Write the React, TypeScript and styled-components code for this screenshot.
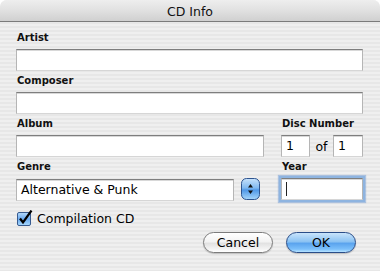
import React from "react";
import styled, { createGlobalStyle } from "styled-components";

const Global = createGlobalStyle`
  html, body { margin: 0; padding: 0; background: #ffffff; }
  body { font-family: "DejaVu Sans", "Verdana", sans-serif; color: #000; }
  * { box-sizing: border-box; }
`;

const Window = styled.div`
  width: 380px;
  height: 271px;
  display: flex;
  flex-direction: column;
  overflow: hidden;
  border-radius: 7px 7px 0 0;
  background: repeating-linear-gradient(
    to bottom,
    #efefef 0px,
    #efefef 2px,
    #e7e7e7 2px,
    #e7e7e7 4px
  );
`;

const TitleBar = styled.div`
  height: 22px;
  flex: none;
  display: flex;
  align-items: center;
  justify-content: center;
  background: linear-gradient(to bottom, #eeeeee 0%, #e2e2e2 45%, #d0d0d0 100%);
  border-bottom: 1px solid #7b7b7b;
  font-size: 12.5px;
  color: #111;
  padding-top: 1px;
`;

const Body = styled.div`
  flex: 1;
  display: flex;
  flex-direction: column;
  padding: 10px 17px 0 16px;
`;

const Field = styled.div<{ $top?: number }>`
  display: flex;
  flex-direction: column;
  margin-top: ${(p) => p.$top ?? 0}px;
`;

const Label = styled.div<{ $indent?: number }>`
  font-size: 10px;
  font-weight: bold;
  line-height: 12px;
  height: 12px;
  margin: 0 0 5px ${(p) => p.$indent ?? 1}px;
  color: #111;
`;

const TextBox = styled.div<{ $w?: number; $focus?: boolean }>`
  height: 22px;
  width: ${(p) => (p.$w ? `${p.$w}px` : "100%")};
  background: #fff;
  border-top: 1px solid #7e7e7e;
  border-left: 1px solid #b5b5b5;
  border-right: 1px solid #b5b5b5;
  border-bottom: 1px solid #d6d6d6;
  box-shadow: inset 0 1px 0 #d8d8d8${(p) =>
    p.$focus ? ", 0 0 0 2px #8eb4e0, 0 0 1px 3px rgba(120,160,215,0.55)" : ""};
  font-size: 12.5px;
  line-height: 20px;
  padding-left: 4px;
  display: flex;
  align-items: center;
  flex: none;
`;

const Caret = styled.span`
  display: inline-block;
  width: 1px;
  height: 14px;
  background: #222;
`;

const Row = styled.div`
  display: flex;
  align-items: flex-start;
`;

const LeftCol = styled.div`
  width: 248px;
  display: flex;
  flex-direction: column;
`;

const RightCol = styled.div`
  margin-left: 17px;
  width: 82px;
  display: flex;
  flex-direction: column;
`;

const DiscRow = styled.div`
  display: flex;
  align-items: center;
`;

const Of = styled.span`
  font-size: 12.5px;
  width: 23px;
  text-align: center;
`;

const GenreRow = styled.div`
  display: flex;
  align-items: center;
  gap: 7px;
`;

const CheckRow = styled.label`
  display: flex;
  align-items: center;
  gap: 4px;
  margin-top: 9px;
  margin-left: 1px;
  font-size: 12.5px;
  height: 16px;
`;

const Buttons = styled.div`
  display: flex;
  justify-content: flex-end;
  gap: 13px;
  margin-top: 6px;
  margin-right: 7px;
`;

const Pill = styled.div<{ $primary?: boolean }>`
  width: 70px;
  height: 21px;
  border-radius: 11px;
  display: flex;
  align-items: center;
  justify-content: center;
  font-size: 12.5px;
  color: #000;
  border: 1px solid ${(p) => (p.$primary ? "#2a4d88" : "#7c7c7c")};
  background: ${(p) =>
    p.$primary
      ? "linear-gradient(to bottom, #c9e4fb 0%, #8cc3f3 45%, #5ba4ee 55%, #7cc0fb 85%, #b7e3ff 100%)"
      : "linear-gradient(to bottom, #ffffff 0%, #f3f3f3 45%, #e2e2e2 55%, #f4f4f4 85%, #ffffff 100%)"};
  box-shadow: 0 1px 1px rgba(0, 0, 0, 0.2);
`;

const Stepper = () => (
  <svg width="20" height="23" viewBox="0 0 20 23">
    <defs>
      <linearGradient id="stg" x1="0" y1="0" x2="0" y2="1">
        <stop offset="0" stopColor="#c8e2fb" />
        <stop offset="0.45" stopColor="#80b8f0" />
        <stop offset="0.55" stopColor="#4f97e6" />
        <stop offset="1" stopColor="#a7d7fb" />
      </linearGradient>
    </defs>
    <rect x="0.5" y="0.5" width="18" height="21" rx="5" fill="url(#stg)" stroke="#2f5590" />
    <path d="M9.5 6 L12 9.5 L7 9.5 Z" fill="#111" />
    <path d="M9.5 16 L12 12.5 L7 12.5 Z" fill="#111" />
  </svg>
);

const CheckBox = () => (
  <svg width="16" height="16" viewBox="0 0 16 16">
    <defs>
      <linearGradient id="cbg" x1="0" y1="0" x2="0" y2="1">
        <stop offset="0" stopColor="#b6dafa" />
        <stop offset="0.5" stopColor="#6aaaf0" />
        <stop offset="1" stopColor="#a9dafd" />
      </linearGradient>
    </defs>
    <rect x="0.5" y="2.5" width="13" height="13" rx="1.5" fill="url(#cbg)" stroke="#375a8f" />
    <path d="M3 8.5 L6 12.5 L14.5 0.5" fill="none" stroke="#000" strokeWidth="2.2" strokeLinejoin="miter" />
  </svg>
);

export default function App() {
  return (
    <>
      <Global />
      <Window>
        <TitleBar>CD Info</TitleBar>
        <Body>
          <Field>
            <Label>Artist</Label>
            <TextBox />
          </Field>
          <Field $top={4}>
            <Label>Composer</Label>
            <TextBox />
          </Field>
          <Row>
            <LeftCol>
              <Field $top={4}>
                <Label>Album</Label>
                <TextBox />
              </Field>
              <Field $top={4}>
                <Label>Genre</Label>
                <GenreRow>
                  <TextBox $w={218}>Alternative &amp; Punk</TextBox>
                  <Stepper />
                </GenreRow>
              </Field>
            </LeftCol>
            <RightCol>
              <Field $top={4}>
                <Label>Disc Number</Label>
                <DiscRow>
                  <TextBox $w={29}>1</TextBox>
                  <Of>of</Of>
                  <TextBox $w={30}>1</TextBox>
                </DiscRow>
              </Field>
              <Field $top={4}>
                <Label>Year</Label>
                <TextBox $focus>
                  <Caret />
                </TextBox>
              </Field>
            </RightCol>
          </Row>
          <CheckRow>
            <CheckBox />
            <span>Compilation CD</span>
          </CheckRow>
          <Buttons>
            <Pill>Cancel</Pill>
            <Pill $primary>OK</Pill>
          </Buttons>
        </Body>
      </Window>
    </>
  );
}
